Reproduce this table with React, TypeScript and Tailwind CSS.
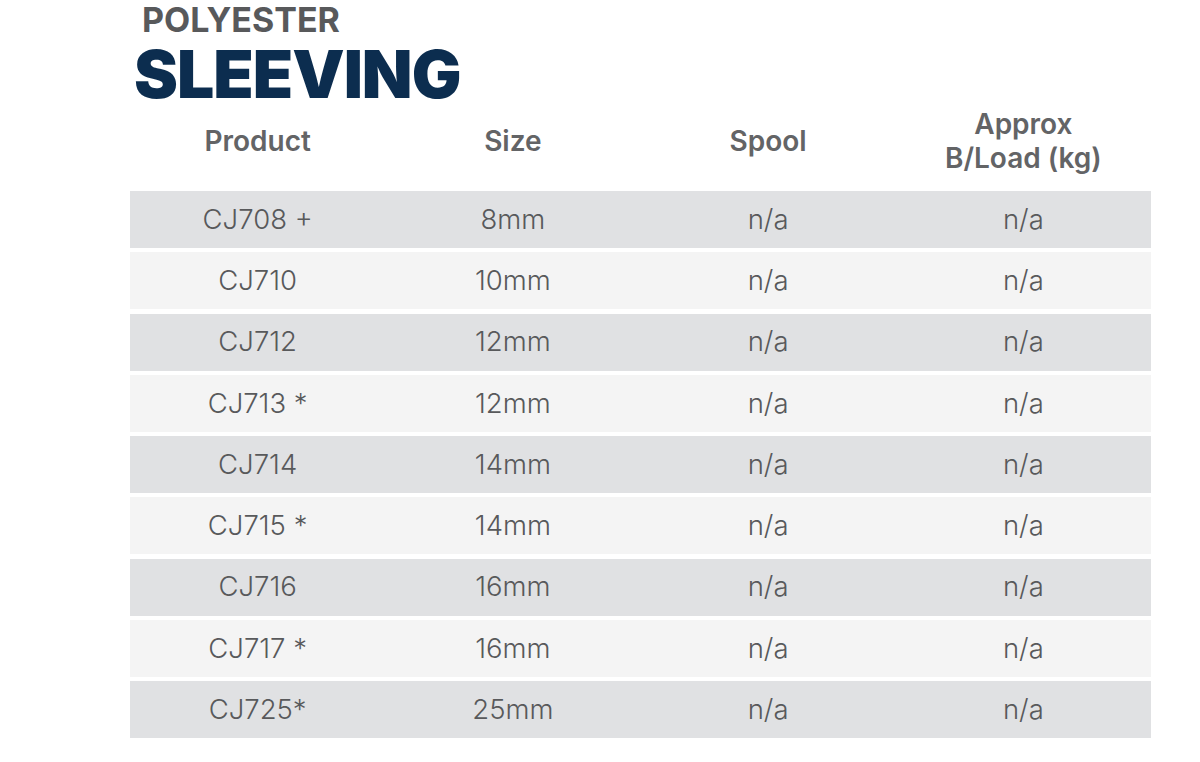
import React from 'react';

const rows = [
  { product: 'CJ708 +', size: '8mm' },
  { product: 'CJ710', size: '10mm' },
  { product: 'CJ712', size: '12mm' },
  { product: 'CJ713 *', size: '12mm' },
  { product: 'CJ714', size: '14mm' },
  { product: 'CJ715 *', size: '14mm' },
  { product: 'CJ716', size: '16mm' },
  { product: 'CJ717 *', size: '16mm' },
  { product: 'CJ725*', size: '25mm' },
];

const App: React.FC = () => {
  return (
    <div className="w-[1200px] h-[762px] bg-white overflow-hidden" style={{ fontFamily: 'Inter, "Open Sans", sans-serif' }}>
      <div className="pl-[134px]">
        <div className="pl-[8px] text-[34px] leading-[40px] font-bold text-[#58595b]">POLYESTER</div>
        <div className="mt-[4px] text-[66px] leading-[60px] font-black text-[#0c2d4f] tracking-[-1px]">SLEEVING</div>
      </div>

      <div className="ml-[130px] w-[1021px]">
        <div className="grid grid-cols-4 h-[87px] pb-[13px] items-center text-center text-[28px] leading-[34px] font-semibold text-[#636466]">
          <div>Product</div>
          <div>Size</div>
          <div>Spool</div>
          <div>
            Approx
            <br />
            B/Load (kg)
          </div>
        </div>

        <div className="flex flex-col gap-[4.25px]">
          {rows.map((r, i) => (
            <div
              key={r.product}
              className={`grid grid-cols-4 h-[57px] items-center text-center text-[27.5px] font-light text-[#58595b] ${i % 2 === 0 ? 'bg-[#e0e1e3]' : 'bg-[#f4f4f4]'}`}
            >
              <div>{r.product}</div>
              <div>{r.size}</div>
              <div>n/a</div>
              <div>n/a</div>
            </div>
          ))}
        </div>
      </div>
    </div>
  );
};

export default App;
